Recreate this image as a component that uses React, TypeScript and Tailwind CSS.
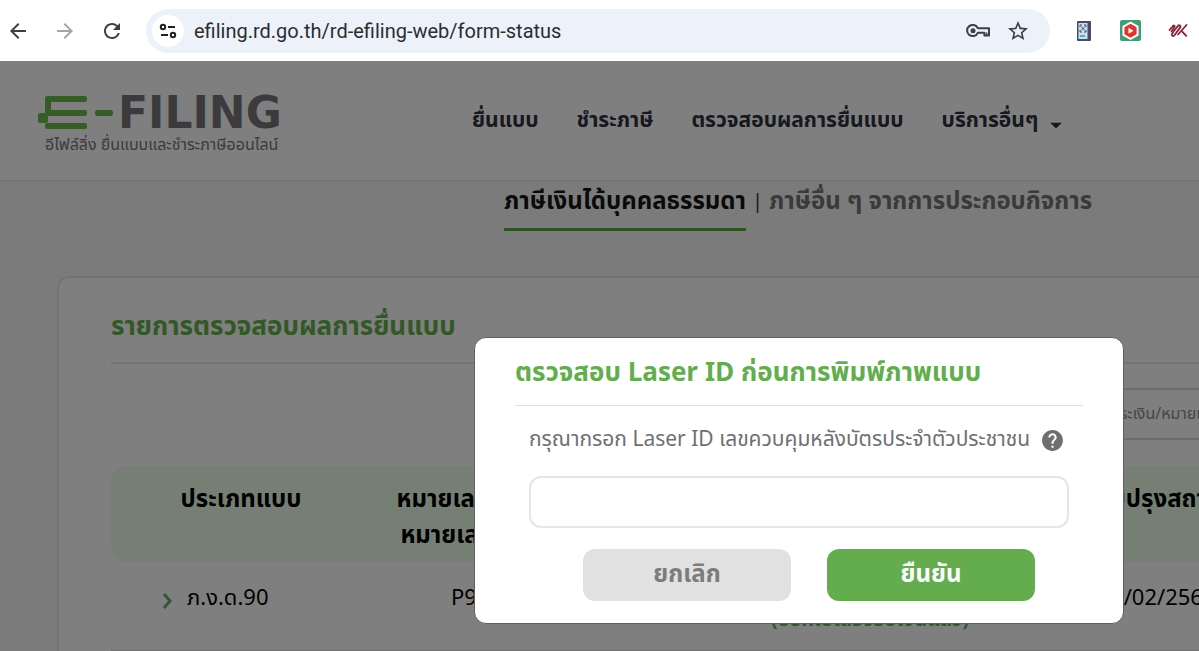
import React from 'react';
import { MdArrowBack, MdArrowForward, MdRefresh, MdStarOutline, MdHelp, MdArrowDropDown } from 'react-icons/md';

const navItems = ['ยื่นแบบ', 'ชำระภาษี', 'ตรวจสอบผลการยื่นแบบ'];

const SiteInfoIcon: React.FC = () => (
    <svg className="w-5 h-5" viewBox="0 0 20 20" fill="none" stroke="#202124" strokeWidth="2">
        <circle cx="5" cy="6" r="2.2" />
        <path d="M10 6h7M3 14h7" />
        <circle cx="15" cy="14" r="2.2" />
    </svg>
);

const KeyIcon: React.FC = () => (
    <svg className="w-6 h-6" viewBox="0 0 24 24" fill="none" stroke="#3c4043" strokeWidth="2" strokeLinejoin="round">
        <path d="M11.800 9.200H23v7.200h-4.600v-2.600h-6.600A5.600 5.600 0 1 1 11.800 9.200Z" />
        <path d="M20.600 13.500v2.500" strokeWidth="1.500" />
        <circle cx="7" cy="11.800" r="2.500" fill="#3c4043" stroke="none" />
    </svg>
);

const ScanExtensionIcon: React.FC = () => (
    <svg className="w-4 h-6" viewBox="0 0 16 24">
        <rect x="1" y="2" width="14" height="20" rx="1" fill="#4a4c66" />
        <rect x="2.5" y="4" width="9" height="16" fill="#c5e0ee" />
        <path d="M4 8V6h2M8 6h2v2M4 11v2h2M8 13h2v-2M5 7.500l4 4M9 7.500l-4 4" stroke="#4a4c66" strokeWidth="1" fill="none" />
        <path d="M4 17h5" stroke="#2f9bc4" strokeWidth="1.5" />
    </svg>
);

const PlayExtensionIcon: React.FC = () => (
    <svg className="w-6 h-6" viewBox="0 0 24 24">
        <rect x="2" y="1" width="21" height="21" rx="2" fill="#3f9d78" />
        <path d="M12.500 2.500l8 4.600v9.300l-8 4.600-8-4.600V7.100Z" fill="#fff" />
        <path d="M12.500 4.700l6.100 3.500v7.100l-6.100 3.500-6.100-3.500V8.200Z" fill="#e2332d" />
        <path d="M10.500 8.700l5 3-5 3Z" fill="#fff" />
    </svg>
);

const SlashExtensionIcon: React.FC = () => (
    <svg className="w-5 h-5" viewBox="0 0 20 20" fill="none" stroke="#8e2136" strokeWidth="1.800" strokeLinecap="round">
        <path d="M1.500 9l3.500-4c1-1 2.200-.2 1.400 1L3.500 10.500" />
        <path d="M5.500 10.500l4.500-5.600c1.300-1.500 3.300-.1 2.200 1.500l-5.700 7.800c-1.300 1.600-3.500.3-2.400-1.400l1-1.400" />
        <path d="M18.500 4l-8.500 9.500M14.500 11l3.800 3.800" />
    </svg>
);

const LogoMark: React.FC = () => (
    <svg className="w-[76px] h-9 shrink-0" viewBox="0 0 76 36" fill="#6cb84e">
        <rect x="7" y="1" width="42" height="6" rx="2" />
        <rect x="7" y="15" width="42" height="6" rx="2" />
        <rect x="7" y="28" width="42" height="6" rx="2" />
        <rect x="7" y="3" width="6" height="17" />
        <rect x="0" y="18" width="10" height="10" rx="2" />
        <rect x="57" y="15" width="18" height="6" rx="2" />
    </svg>
);

const BrowserBar: React.FC = () => (
    <div className="flex items-center h-[61px] shrink-0 bg-white pl-1.5 text-[#3c4043]">
        <div className="flex gap-[23px]">
            <button aria-label="Back"><MdArrowBack className="w-6 h-6" /></button>
            <button aria-label="Forward" className="text-[#a3a5a8]"><MdArrowForward className="w-6 h-6" /></button>
            <button aria-label="Reload"><MdRefresh className="w-6 h-6" /></button>
        </div>
        <div className="flex flex-1 items-center h-11 ml-[22px] pl-1.5 pr-5 rounded-full bg-[#edf2fa]">
            <button aria-label="Site information" className="flex items-center justify-center w-8 h-8 rounded-full bg-white">
                <SiteInfoIcon />
            </button>
            <input
                aria-label="Address"
                className="flex-1 min-w-0 ml-2.5 bg-transparent outline-none font-[Roboto,sans-serif] text-xl text-[#2b2d31]"
                defaultValue="efiling.rd.go.th/rd-efiling-web/form-status"
            />
            <button aria-label="Passwords"><KeyIcon /></button>
            <button aria-label="Bookmark" className="ml-4"><MdStarOutline className="w-6 h-6" /></button>
        </div>
        <div className="flex items-center gap-[26px] ml-[26px] mr-[11px]">
            <ScanExtensionIcon />
            <PlayExtensionIcon />
            <SlashExtensionIcon />
        </div>
    </div>
);

const SiteHeader: React.FC = () => (
    <header className="flex items-start h-[121px] bg-white border-b-2 border-[#ececec]">
        <a href="#" className="block w-[248px] ml-[38px] pt-[34px] text-[#77777a]">
            <span className="flex items-center h-9">
                <LogoMark />
                <span className="pl-1 font-['DejaVu_Sans'] font-bold text-[44px] leading-9">FILING</span>
            </span>
            <span className="block pt-0.5 pl-[7px] text-base leading-6 whitespace-nowrap">อีไฟล์ลิ่ง ยื่นแบบและชำระภาษีออนไลน์</span>
        </a>
        <nav className="flex gap-[38px] ml-[186px] pt-11 text-[21px] leading-8 font-bold text-[#2f3040] whitespace-nowrap">
            {navItems.map(item => <a key={item} href="#">{item}</a>)}
            <button className="flex items-start gap-1">
                บริการอื่นๆ
                <MdArrowDropDown className="w-7 h-7 mt-1.5" />
            </button>
        </nav>
    </header>
);

const StatusTable: React.FC = () => (
    <table className="w-[1380px] table-fixed text-[22px]">
        <thead className="text-2xl text-black">
            <tr className="bg-[#ebffe7] align-top leading-9">
                <th className="w-[260px] h-24 pt-4 rounded-l-2xl">ประเภทแบบ</th>
                <th className="w-[210px] pt-4">หมายเลขอ้างอิง<br />หมายเลขแบบฯ</th>
                <th className="w-[102px]" />
                <th className="w-[374px] pt-4">สถานะ</th>
                <th className="w-[200px] pt-4">ปรับปรุงสถานะ</th>
                <th className="rounded-r-2xl" />
            </tr>
        </thead>
        <tbody>
            <tr className="align-top leading-9 border-b-2 border-[#e4e4e4]">
                <td className="h-[89px] pt-[19px] pl-12">
                    <span className="flex items-center gap-3">
                        <svg className="w-4 h-5 mt-1" viewBox="0 0 16 20" fill="none" stroke="#5fb56a" strokeWidth="3">
                            <path d="M5 3l6 7-6 7" />
                        </svg>
                        ภ.ง.ด.90
                    </span>
                </td>
                <td className="pt-[19px] pl-20">P90</td>
                <td />
                <td className="pt-11 text-center text-xl font-bold text-[#5fae62]">(ออกใบเสร็จรับเงินแล้ว)</td>
                <td className="pt-[19px] text-center">01/02/2567</td>
                <td />
            </tr>
        </tbody>
    </table>
);

const LaserIdDialog: React.FC = () => (
    <form role="dialog" aria-labelledby="laser-title" className="w-[650px] px-10 pb-[22px] bg-white rounded-xl border border-[#5f5f5f]">
        <h2 id="laser-title" className="pt-4 pb-3 border-b border-[#dedede] text-[26px] leading-[39px] font-bold text-[#62ad4d] whitespace-nowrap">
            ตรวจสอบ Laser ID ก่อนการพิมพ์ภาพแบบ
        </h2>
        <div className="px-3.5 pt-4">
            <div className="flex items-center gap-2.5 text-[#6f6f72]">
                <label htmlFor="laser-id" className="text-[21px] leading-9 whitespace-nowrap">กรุณากรอก Laser ID เลขควบคุมหลังบัตรประจำตัวประชาชน</label>
                <button type="button" aria-label="Help"><MdHelp className="w-[25px] h-[25px]" /></button>
            </div>
            <input id="laser-id" className="block w-full h-[52px] mt-[18px] px-4 rounded-xl border-2 border-[#e6e6e6] outline-none text-xl" />
        </div>
        <div className="flex justify-center gap-9 mt-[21px] pl-5 text-2xl font-bold">
            <button type="button" className="w-52 h-[52px] rounded-xl bg-[#e1e1e1] text-[#7c7c7c]">ยกเลิก</button>
            <button type="submit" className="w-52 h-[52px] rounded-xl bg-[#64ad4f] text-white">ยืนยัน</button>
        </div>
    </form>
);

export default function App() {
    return (
        <div className="flex flex-col h-screen overflow-hidden font-['Noto_Sans_Thai','Noto_Sans',sans-serif]">
            <BrowserBar />
            <div className="relative flex-1 overflow-hidden bg-[#f7f7f7]">
                <SiteHeader />

                {/* Tax type tabs */}
                <div className="flex h-[94px] pl-[504px] text-2xl leading-10 font-bold whitespace-nowrap">
                    <a href="#" className="h-[49px] border-b-[3px] border-[#5fa548] text-[#151515]">ภาษีเงินได้บุคคลธรรมดา</a>
                    <span className="px-1.5 text-xl leading-10 font-normal text-[#333333]">|</span>
                    <a href="#" className="text-[#757575]">ภาษีอื่น ๆ จากการประกอบกิจการ</a>
                </div>

                {/* Filing results */}
                <section className="ml-[57px] pl-[52px] pt-[27px] rounded-tl-xl border-t-2 border-l-2 border-[#e6e6e6] bg-white overflow-hidden">
                    <h1 className="pb-[13px] border-b-2 border-[#e9e9e9] text-[26px] leading-[44px] font-bold text-[#66b04e]">รายการตรวจสอบผลการยื่นแบบ</h1>
                    <div className="flex pt-6 pb-[26px] pl-[840px]">
                        <input
                            aria-label="ค้นหา"
                            className="w-[540px] h-[52px] shrink-0 px-4 border-2 border-[#d8d8d8] rounded-xl text-base placeholder:text-[#8c8c8c]"
                            placeholder="ค้นหาปีภาษี/หมายเลขชำระเงิน/หมายเลขอ้างอิง"
                        />
                    </div>
                    <StatusTable />
                </section>

                <div className="absolute inset-0 flex items-start justify-end pt-[276px] pr-[75px] bg-black/50">
                    <LaserIdDialog />
                </div>
            </div>
        </div>
    );
}
